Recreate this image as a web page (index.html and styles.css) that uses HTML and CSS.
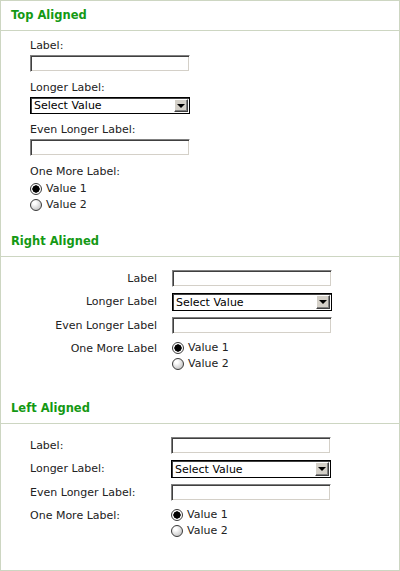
FILE: index.html
```html
<!DOCTYPE html>
<html lang="en">
<head>
    <meta charset="UTF-8">
    <meta name="viewport" content="width=device-width, initial-scale=1.0">
    <title>Form Label Alignment</title>
    <link rel="stylesheet" href="styles.css">
</head>
<body>
    <div class="page">
        <section class="group">
            <h2 class="group-title">Top Aligned</h2>
            <form class="group-body top-form">
                <div class="field">
                    <label class="field-label">Label:</label>
                    <input type="text" class="text-input">
                </div>
                <div class="field">
                    <label class="field-label">Longer Label:</label>
                    <span class="select-box">
                        <select class="select-input"><option>Select Value</option></select>
                        <span class="select-arrow"></span>
                    </span>
                </div>
                <div class="field">
                    <label class="field-label">Even Longer Label:</label>
                    <input type="text" class="text-input">
                </div>
                <div class="field last">
                    <label class="field-label">One More Label:</label>
                    <div class="radio-list">
                        <label class="radio-row"><input type="radio" name="top" class="radio" checked>Value 1</label>
                        <label class="radio-row"><input type="radio" name="top" class="radio">Value 2</label>
                    </div>
                </div>
            </form>
        </section>

        <section class="group">
            <h2 class="group-title">Right Aligned</h2>
            <form class="group-body side-form right-form">
                <label class="side-label">Label</label>
                <input type="text" class="text-input">
                <label class="side-label">Longer Label</label>
                <span class="select-box">
                    <select class="select-input"><option>Select Value</option></select>
                    <span class="select-arrow"></span>
                </span>
                <label class="side-label">Even Longer Label</label>
                <input type="text" class="text-input">
                <label class="side-label">One More Label</label>
                <div class="radio-list">
                    <label class="radio-row"><input type="radio" name="right" class="radio" checked>Value 1</label>
                    <label class="radio-row"><input type="radio" name="right" class="radio">Value 2</label>
                </div>
            </form>
        </section>

        <section class="group">
            <h2 class="group-title">Left Aligned</h2>
            <form class="group-body side-form left-form">
                <label class="side-label">Label:</label>
                <input type="text" class="text-input">
                <label class="side-label">Longer Label:</label>
                <span class="select-box">
                    <select class="select-input"><option>Select Value</option></select>
                    <span class="select-arrow"></span>
                </span>
                <label class="side-label">Even Longer Label:</label>
                <input type="text" class="text-input">
                <label class="side-label">One More Label:</label>
                <div class="radio-list">
                    <label class="radio-row"><input type="radio" name="left" class="radio" checked>Value 1</label>
                    <label class="radio-row"><input type="radio" name="left" class="radio">Value 2</label>
                </div>
            </form>
        </section>
    </div>
</body>
</html>
```

FILE: styles.css
```css
body {
    margin: 0;
    padding: 0;
    background-color: #ffffff;
    font-family: "DejaVu Sans", Verdana, sans-serif;
    font-size: 11px;
    color: #222222;
}
.page {
    width: 400px;
    height: 571px;
    box-sizing: border-box;
    border: 1px solid #cdd6c2;
}
.group-title {
    margin: 0;
    padding: 7px 10px;
    font-size: 11.5px;
    line-height: 15px;
    font-weight: bold;
    color: #149914;
    border-bottom: 1px solid #cdd6c2;
}
.group-body {
    margin: 0;
}

/* top aligned */
.top-form {
    padding: 7px 0 14px 29px;
}
.field {
    margin-bottom: 8px;
}
.field.last {
    margin-bottom: 0;
}
.field-label {
    display: block;
    line-height: 15px;
    margin-bottom: 2px;
}

/* controls */
.text-input {
    display: block;
    box-sizing: border-box;
    width: 160px;
    height: 17px;
    margin: 0;
    padding: 0 3px;
    border: 1px solid;
    border-color: #808080 #ffffff #ffffff #808080;
    box-shadow: inset 1px 1px #404040, inset -1px -1px #d4d0c8;
    background: #ffffff;
    font: inherit;
}
.select-box {
    position: relative;
    display: block;
    width: 160px;
    height: 17px;
}
.select-input {
    appearance: none;
    -webkit-appearance: none;
    box-sizing: border-box;
    width: 160px;
    height: 17px;
    margin: 0;
    padding: 0 0 0 3px;
    border: 1px solid #000000;
    box-shadow: inset 1px 1px #404040;
    border-radius: 0;
    background: #ffffff;
    font-family: inherit;
    font-size: 11px;
    line-height: 15px;
    color: #000000;
}
.select-arrow {
    position: absolute;
    top: 2px;
    right: 2px;
    width: 14px;
    height: calc(100% - 4px);
    box-sizing: border-box;
    background: #d4d0c8;
    border: 1px solid;
    border-color: #ffffff #404040 #404040 #ffffff;
    box-shadow: inset -1px -1px #808080;
    pointer-events: none;
}
.select-arrow::after {
    content: "";
    position: absolute;
    left: 2px;
    top: 4px;
    border-left: 4px solid transparent;
    border-right: 4px solid transparent;
    border-top: 4px solid #000000;
}

/* radios */
.radio-list {
    display: flex;
    flex-direction: column;
}
.radio-row {
    display: flex;
    align-items: center;
    height: 16px;
    line-height: 16px;
    color: #222222;
}
.radio {
    appearance: none;
    -webkit-appearance: none;
    box-sizing: border-box;
    width: 12px;
    height: 12px;
    margin: 0 4px 0 0;
    border: 1px solid #3a3a3a;
    border-radius: 50%;
    background: radial-gradient(circle at 35% 30%, #ffffff 15%, #b4b4b4 100%);
}
.radio:checked {
    background: radial-gradient(circle, #000000 0 3.4px, #ffffff 3.9px);
}

/* side by side */
.side-form {
    display: grid;
    row-gap: 6px;
    padding: 13px 0 22px 29px;
    align-items: start;
}
.right-form {
    grid-template-columns: 127px 160px;
    column-gap: 15px;
}
.left-form {
    grid-template-columns: 141px 160px;
    padding-bottom: 31px;
}
.side-label {
    line-height: 17px;
}
.right-form .side-label {
    text-align: right;
}
.side-form .select-box,
.side-form .select-input {
    height: 18px;
}
```
